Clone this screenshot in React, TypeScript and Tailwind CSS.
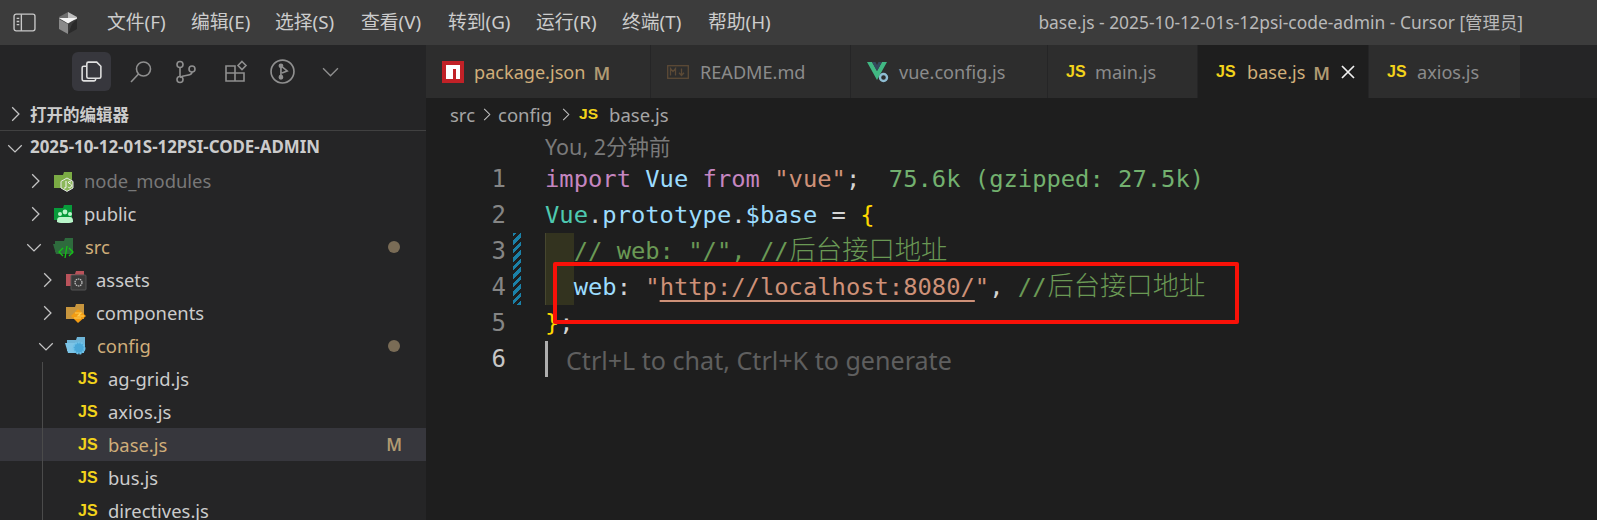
import React from "react";

const SANS = "font-['Noto_Sans','Noto_Sans_CJK_SC',sans-serif]";

function Js({ className = "" }: { className?: string }) {
  return (
    <span className={`inline-block shrink-0 font-['Liberation_Sans',sans-serif] font-bold text-[#f2d31b] ${className}`}>JS</span>
  );
}

function Chevron({ down, className = "" }: { down?: boolean; className?: string }) {
  return (
    <svg viewBox="0 0 16 16" className={`w-[18px] h-[18px] shrink-0 ${className}`} fill="none" stroke="#c5c5c5" strokeWidth="1.1">
      {down ? <path d="M2 5.5l6 6 6-6" /> : <path d="M5.5 2l6 6-6 6" />}
    </svg>
  );
}

const Node = () => (
  <svg viewBox="0 0 22 22" className="w-[22px] h-[22px] shrink-0">
    <path d="M1 5h9l1-3h8v16H1z" fill="#8bc34a" opacity=".85" />
    <path d="M14 8l6 3.400v6.600l-6 3.400-6-3.400v-6.600z" fill="#8bb85a" stroke="#e8e8e8" strokeWidth="1" />
    <path d="M13 11v6q0 1.500-2 1M18 12q-2-1-2.600 0t2 2 .5 3-2.700-.2" fill="none" stroke="#f4f4f4" strokeWidth="1" />
  </svg>
);
const Pub = () => (
  <svg viewBox="0 0 22 22" className="w-[22px] h-[22px] shrink-0">
    <path d="M1 5h9l1-3h8v15H1z" fill="#079b3a" />
    <g fill="#b9f6ca">
      <circle cx="7" cy="11" r="2" /><circle cx="17" cy="11" r="2" /><circle cx="12" cy="9" r="2.400" />
      <path d="M4 18q0-4 3-4h10q3 0 3 4v1q-2 1-4 1H8q-2 0-4-1z" />
    </g>
  </svg>
);
const Src = () => (
  <svg viewBox="0 0 24 22" className="w-[24px] h-[22px] shrink-0">
    <path d="M3 5h9l1-3h8v14H3z" fill="#2e6b3d" />
    <path d="M1 8h18l2 10H4z" fill="#2e6b3d" />
    <path d="M11 12l-4 4 4 4M17 12l4 4-4 4M15 10l-2 12" fill="none" stroke="#15c415" strokeWidth="1.300" />
  </svg>
);
const Assets = () => (
  <svg viewBox="0 0 22 22" className="w-[22px] h-[22px] shrink-0">
    <path d="M1 5h9l1-3h8v15H1z" fill="#b9525a" />
    <rect x="6" y="6" width="15" height="15" rx="1" fill="#3a3a3a" stroke="#555" />
    <circle cx="13.500" cy="13.500" r="3.500" fill="none" stroke="#c8c8c8" strokeWidth="1.200" strokeDasharray="1.500 .7" />
  </svg>
);
const Comp = () => (
  <svg viewBox="0 0 22 22" className="w-[22px] h-[22px] shrink-0">
    <path d="M1 5h9l1-3h8v15H1z" fill="#c8963e" />
    <path d="M13 7l8 7-8 7-7-7z" fill="#f39c12" />
    <path d="M10 11h6l-3 3h6M9 16h7" stroke="#ffce54" strokeWidth="1.200" fill="none" />
  </svg>
);
const Config = () => (
  <svg viewBox="0 0 24 22" className="w-[24px] h-[22px] shrink-0">
    <path d="M3 5h9l1-3h8v14H3z" fill="#6eb5d8" />
    <path d="M1 8h17l2 10H4z" fill="#7cc4e6" />
    <circle cx="15" cy="13" r="5.500" fill="#4aa8d8" stroke="#6ec1e8" strokeWidth="2" strokeDasharray="2 1" />
  </svg>
);

function Row({ indent, chevron, down, icon, label, color = "text-[#cccccc]", badge, dot, selected, guide }: {
  indent: string; chevron?: boolean; down?: boolean; icon: React.ReactNode; label: string; color?: string;
  badge?: string; dot?: boolean; selected?: boolean; guide?: boolean;
}) {
  return (
    <div className={`h-[33px] shrink-0 flex items-center relative ${indent} ${selected ? "bg-[#37373d]" : ""}`}>
      {guide && <div className="absolute left-[42px] top-0 bottom-0 w-px bg-[#4b4b4b]" />}
      {chevron && <Chevron down={down} className="mr-[9px]" />}
      {icon}
      <span className={`ml-[9px] mt-[2px] text-[18.400px] leading-none ${color}`}>{label}</span>
      {badge && <span className="ml-auto mr-[24px] text-[17px] font-semibold text-[#b09a72]">{badge}</span>}
      {dot && <span className="ml-auto mr-[26px] w-[12px] h-[12px] rounded-full bg-[#7a6c56]" />}
    </div>
  );
}

const FileRow = ({ label, color, badge, selected }: { label: string; color?: string; badge?: string; selected?: boolean }) => (
  <Row indent="pl-[78px]" guide selected={selected} badge={badge} color={color} label={label}
    icon={<Js className="text-[16px] w-[21px]" />} />
);

function Tab({ w, icon, label, active, m, file }: { w: string; icon: React.ReactNode; label: string; active?: boolean; m?: boolean; file?: string }) {
  return (
    <div className={`${w} h-full shrink-0 flex items-center pl-4 border-r border-[#252526] ${active ? "bg-[#1e1e1e]" : "bg-[#2d2d2d]"}`}>
      {icon}
      <span className={`mt-[2px] text-[18.100px] leading-none ${file ?? "text-[#8b8b8b]"}`}>{label}</span>
      {m && <span className="ml-[8px] mt-[2px] text-[18px] leading-none font-semibold text-[#b09a72]">M</span>}
      {active && (
        <svg viewBox="0 0 14 14" className="ml-[11px] w-[14px] h-[14px]" stroke="#f0f0f0" strokeWidth="1.700"><path d="M1 1l12 12M13 1L1 13" /></svg>
      )}
    </div>
  );
}

const Cjk = ({ children }: { children: React.ReactNode }) => (
  <span className="ml-[1px] font-['Noto_Sans_CJK_SC',sans-serif] font-light text-[26.300px] leading-none">{children}</span>
);

function Line({ n, current, children }: { n: number; current?: boolean; children?: React.ReactNode }) {
  return (
    <div className="h-9 flex items-center shrink-0">
      <span className={`w-[80px] text-right text-[24px] leading-none ${current ? "text-[#c6c6c6]" : "text-[#858585]"}`}>{n}</span>
      <div className="w-[39px] shrink-0" />
      <div className="whitespace-pre text-[23.800px] leading-9 h-9 flex items-center">{children}</div>
    </div>
  );
}

const menus = [
  { t: "文件(F)", w: "w-[84px]" },
  { t: "编辑(E)", w: "w-[84px]" },
  { t: "选择(S)", w: "w-[86px]" },
  { t: "查看(V)", w: "w-[87px]" },
  { t: "转到(G)", w: "w-[88px]" },
  { t: "运行(R)", w: "w-[86px]" },
  { t: "终端(T)", w: "w-[86px]" },
  { t: "帮助(H)", w: "w-[70px]" },
];

export default function App() {
  return (
    <div className={`relative w-[1597px] h-[520px] overflow-hidden flex flex-col bg-[#1e1e1e] ${SANS}`}>
      {/* title bar */}
      <header className="h-[45px] shrink-0 bg-[#3c3c3c] flex items-center">
        <svg viewBox="0 0 22 18" className="ml-[13px] w-[23px] h-[19px]" fill="none" stroke="#c8c8c8" strokeWidth="1.300">
          <rect x="1" y="1" width="20" height="16" rx="2" />
          <path d="M8 1v16M3.500 5h2.500M3.500 8h2.500M3.500 11h2.500" />
        </svg>
        <svg viewBox="0 0 20 22" className="ml-[22px] w-[20px] h-[22px]">
          <path d="M10 0L1 5v2l9 3z" fill="#6e6e6e" />
          <path d="M10 0l9 5v2l-9 3z" fill="#bdbdbd" />
          <path d="M1 6l18 0-9 5.500z" fill="#f4f4f4" />
          <path d="M1 7l9 5 0 10-9-5z" fill="#8a8a8a" />
          <path d="M19 7v10l-9 5 4-10z" fill="#2a2a2a" />
        </svg>
        <nav className="ml-[29px] flex text-[18.800px] leading-none text-[#cccccc]">
          {menus.map((m) => <span key={m.t} className={`${m.w} whitespace-nowrap`}>{m.t}</span>)}
        </nav>
        <span className="ml-auto mr-[74px] text-[17.400px] leading-none text-[#b9b9b9] whitespace-nowrap">base.js - 2025-10-12-01s-12psi-code-admin - Cursor [管理员]</span>
      </header>

      <div className="flex-1 flex min-h-0">
        {/* sidebar */}
        <aside className="w-[426px] shrink-0 bg-[#252526] flex flex-col overflow-hidden">
          <div className="h-[53px] shrink-0 flex items-center pl-[72px] relative">
            <div className="w-[39px] h-[39px] rounded-[6px] bg-[#37373d] flex items-center justify-center">
              <svg viewBox="0 0 24 24" className="w-[25px] h-[25px]" fill="none" stroke="#e0e0e0" strokeWidth="1.500">
                <path d="M9 3h8l4 4v10a1.500 1.500 0 0 1-1.500 1.500H9A1.500 1.500 0 0 1 7.500 17V4.500A1.500 1.500 0 0 1 9 3z" />
                <path d="M7.500 7H4.500A1.500 1.500 0 0 0 3 8.500v11A1.500 1.500 0 0 0 4.500 21h10a1.500 1.500 0 0 0 1.500-1.500v-1" />
              </svg>
            </div>
            <svg viewBox="0 0 24 24" className="ml-[18px] w-[24px] h-[24px]" fill="none" stroke="#8f8f8f" strokeWidth="1.600">
              <circle cx="14.500" cy="9" r="7" /><path d="M9.500 14L2 22" />
            </svg>
            <svg viewBox="0 0 24 24" className="ml-[21px] w-[24px] h-[24px]" fill="none" stroke="#8f8f8f" strokeWidth="1.600">
              <circle cx="6" cy="4.500" r="3" /><circle cx="6" cy="19.500" r="3" /><circle cx="18" cy="9" r="3" />
              <path d="M6 7.500v9M18 12q0 3-6 3.500-4 .5-6 2" />
            </svg>
            <svg viewBox="0 0 24 24" className="ml-[26px] w-[24px] h-[24px]" fill="none" stroke="#8f8f8f" strokeWidth="1.600">
              <path d="M2 6h9v15H2zM2 13h18v8h-9M11 13V6" />
              <path d="M18 1.500l4 4-4 4-4-4z" />
            </svg>
            <svg viewBox="0 0 24 24" className="ml-[22px] w-[25px] h-[25px]" fill="none" stroke="#8f8f8f" strokeWidth="1.600">
              <circle cx="12" cy="12" r="11" />
              <circle cx="10.500" cy="17.500" r="1.500" fill="#8f8f8f" /><circle cx="10.500" cy="6.500" r="1.500" fill="#8f8f8f" />
              <path d="M10.500 7v10M10.500 6.500l6 5-5 2" />
            </svg>
            <svg viewBox="0 0 16 16" className="ml-[27px] w-[17px] h-[17px]" fill="none" stroke="#8f8f8f" strokeWidth="1.300">
              <path d="M1 5l7 7 7-7" />
            </svg>
          </div>
          <div className="h-[33px] shrink-0 flex items-center pl-[6px] border-b border-[#414141] text-[16.500px] font-bold text-[#cccccc]">
            <Chevron className="mr-[6px]" />
            <span className="leading-none mt-[2px]">打开的编辑器</span>
          </div>
          <div className="h-[33px] shrink-0 flex items-center pl-[6px] text-[16.900px] font-bold text-[#cccccc]">
            <Chevron down className="mr-[6px]" />
            <span className="leading-none">2025-10-12-01S-12PSI-CODE-ADMIN</span>
          </div>
          <Row indent="pl-[26px]" chevron icon={<Node />} label="node_modules" color="text-[#787878]" />
          <Row indent="pl-[26px]" chevron icon={<Pub />} label="public" />
          <Row indent="pl-[25px]" chevron down icon={<Src />} label="src" color="text-[#d0ae7a]" dot />
          <Row indent="pl-[38px]" chevron icon={<Assets />} label="assets" />
          <Row indent="pl-[38px]" chevron icon={<Comp />} label="components" />
          <Row indent="pl-[37px]" chevron down icon={<Config />} label="config" color="text-[#d0ae7a]" dot />
          <FileRow label="ag-grid.js" />
          <FileRow label="axios.js" />
          <FileRow label="base.js" color="text-[#d0ae7a]" badge="M" selected />
          <FileRow label="bus.js" />
          <FileRow label="directives.js" />
        </aside>

        {/* main */}
        <main className="flex-1 min-w-0 flex flex-col">
          <div className="h-[53px] shrink-0 flex bg-[#252526]">
            <Tab w="w-[225px]" file="text-[#d0ae7a]" m label="package.json" icon={
              <svg viewBox="0 0 22 22" className="w-[22px] h-[22px] mr-[10px] shrink-0">
                <rect width="22" height="22" fill="#c12127" />
                <path d="M4 4h14v14h-4V8h-3v10H4z" fill="#fff" />
              </svg>} />
            <Tab w="w-[200px]" label="README.md" icon={
              <svg viewBox="0 0 22 14" className="w-[22px] h-[14px] mr-[11px] shrink-0" fill="none" stroke="#5c4a36" strokeWidth="1.300">
                <rect x=".7" y=".7" width="20.600" height="12.600" />
                <path d="M3.500 10.500v-7l2.500 3 2.500-3v7M14.500 3.500v6.500M12 7.800l2.500 2.700 2.500-2.700" />
              </svg>} />
            <Tab w="w-[197px]" label="vue.config.js" icon={
              <svg viewBox="0 0 22 22" className="w-[22px] h-[22px] mr-[10px] shrink-0">
                <path d="M0 1h5l5 9 5-9h5L10 19z" fill="#41b883" />
                <path d="M5 1h3.500L10 4l1.500-3H15l-5 9z" fill="#35495e" />
                <circle cx="16.500" cy="16.500" r="3.500" fill="none" stroke="#8fbdd3" strokeWidth="2.400" />
              </svg>} />
            <Tab w="w-[150px]" label="main.js" icon={<Js className="text-[16px] w-[29px] ml-[2px]" />} />
            <Tab w="w-[171px]" active m file="text-[#d0ae7a]" label="base.js" icon={<Js className="text-[16px] w-[31px] ml-[2px]" />} />
            <Tab w="w-[152px]" label="axios.js" icon={<Js className="text-[16px] w-[30px] ml-[2px]" />} />
          </div>

          <div className="h-[32px] shrink-0 flex items-center pl-[24px] text-[18.500px] leading-none text-[#a5a5a5]">
            <span className="mt-[2px]">src</span>
            <Chevron className="mx-[4px] !w-[15px] !h-[15px]" />
            <span className="mt-[2px]">config</span>
            <Chevron className="mx-[6px] !w-[15px] !h-[15px]" />
            <Js className="text-[15.500px] w-[30px]" />
            <span className="mt-[2px]">base.js</span>
          </div>

          <div className="relative flex-1 min-h-0 font-['DejaVu_Sans_Mono',monospace]">
            <div className={`h-[31px] pl-[119px] pt-[3px] flex items-center text-[21.500px] leading-none text-[#7a7a7a] ${SANS}`}>You, 2分钟前</div>
            <div className="absolute left-[87px] top-[103px] w-[8px] h-[72px] bg-[repeating-linear-gradient(-45deg,#1b81a8,#1b81a8_3px,transparent_3px,transparent_6px)]" />
            <div className="absolute left-[119px] top-[103px] w-[29px] h-[72px] bg-[#33331f] border-l border-[#47472f]" />
            <div className="relative">
              <Line n={1}>
                <span className="text-[#c586c0]">import</span><span> </span><span className="text-[#9cdcfe]">Vue</span><span> </span>
                <span className="text-[#c586c0]">from</span><span> </span><span className="text-[#ce9178]">"vue"</span><span className="text-[#d4d4d4]">;</span>
                <span className="text-[#73b16f]">{"  75.6k (gzipped: 27.5k)"}</span>
              </Line>
              <Line n={2}>
                <span className="text-[#4ec9b0]">Vue</span><span className="text-[#d4d4d4]">.</span><span className="text-[#9cdcfe]">prototype</span>
                <span className="text-[#d4d4d4]">.</span><span className="text-[#9cdcfe]">$base</span><span className="text-[#d4d4d4]"> = </span><span className="text-[#ffd700]">{"{"}</span>
              </Line>
              <Line n={3}>
                <span className="text-[#6a9955]">{'  // web: "/", //'}<Cjk>后台接口地址</Cjk></span>
              </Line>
              <Line n={4}>
                <span>{"  "}</span><span className="text-[#9cdcfe]">web</span><span className="text-[#d4d4d4]">: </span>
                <span className="text-[#ce9178]">"</span><span className="text-[#ce9178] underline decoration-2 underline-offset-[5px]">http://localhost:8080/</span><span className="text-[#ce9178]">"</span>
                <span className="text-[#d4d4d4]">, </span><span className="text-[#6a9955]">{"//"}<Cjk>后台接口地址</Cjk></span>
              </Line>
              <Line n={5}>
                <span className="text-[#ffd700]">{"}"}</span><span className="text-[#d4d4d4]">;</span>
              </Line>
              <Line n={6} current>
                <span className="block w-[3px] h-[36px] bg-[#aeaeae] mr-[18px]" />
                <span className={`mt-[4px] text-[25.100px] leading-none text-[#5f5f5f] ${SANS}`}>Ctrl+L to chat, Ctrl+K to generate</span>
              </Line>
            </div>
          </div>
        </main>
      </div>

      {/* red annotation */}
      <div className="absolute left-[553px] top-[262px] w-[686px] h-[62px] border-4 border-[#f91108] rounded-[2px]" />
    </div>
  );
}
